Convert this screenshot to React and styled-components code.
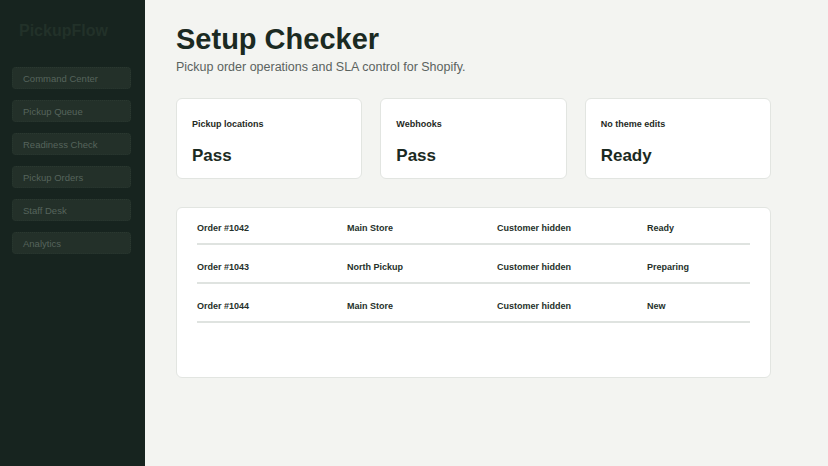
import React from "react";
import styled, { createGlobalStyle } from "styled-components";

const GlobalStyle = createGlobalStyle`
    html, body {
        margin: 0;
        padding: 0;
        background: #f3f4f1;
        font-family: "Liberation Sans", Arial, sans-serif;
    }
`;

const Layout = styled.div`
    display: flex;
    min-height: 466px;
`;

const Sidebar = styled.nav`
    width: 145px;
    flex-shrink: 0;
    background: #17241f;
    padding: 22px 14px 0 12px;
    box-sizing: border-box;
`;

const Brand = styled.div`
    color: #223129;
    font-size: 16px;
    font-weight: bold;
    padding-left: 7px;
    margin-bottom: 27px;
`;

const NavList = styled.div`
    display: flex;
    flex-direction: column;
    gap: 11px;
`;

const NavItem = styled.div`
    height: 22px;
    display: flex;
    align-items: center;
    padding-left: 10px;
    border-radius: 4px;
    background: #233029;
    border: 1px dotted #2a3830;
    box-sizing: border-box;
    color: #56645c;
    font-size: 9.5px;
`;

const Main = styled.main`
    flex: 1;
    padding: 22px 57px 0 31px;
`;

const Title = styled.h1`
    margin: 0;
    font-size: 29px;
    font-weight: bold;
    color: #1b2a22;
    line-height: 35px;
`;

const Subtitle = styled.p`
    margin: 3px 0 0;
    font-size: 12.5px;
    color: #5b635f;
`;

const Cards = styled.div`
    display: grid;
    grid-template-columns: repeat(3, 1fr);
    gap: 18px;
    margin-top: 24px;
`;

const Panel = styled.div`
    background: #fff;
    border: 1px solid #e2e5e1;
    border-radius: 6px;
    box-sizing: border-box;
`;

const Card = styled(Panel)`
    height: 81px;
    padding: 20px 15px 0;
`;

const CardLabel = styled.div`
    font-size: 9px;
    font-weight: bold;
    color: #1f2a24;
`;

const CardValue = styled.div`
    margin-top: 17px;
    font-size: 17px;
    font-weight: bold;
    color: #1b2a22;
`;

const TablePanel = styled(Panel)`
    margin-top: 28px;
    height: 171px;
    padding: 0 20px;
`;

const Row = styled.div`
    display: grid;
    grid-template-columns: 150px 150px 150px 1fr;
    padding: 17px 0 9px;
    border-bottom: 2px solid #dfe3e0;
    font-size: 9px;
    font-weight: bold;
    color: #25302a;
    line-height: 11px;

    &:first-child {
        padding-top: 15px;
    }
`;

const navItems = ["Command Center", "Pickup Queue", "Readiness Check", "Pickup Orders", "Staff Desk", "Analytics"];

const checks = [
    { label: "Pickup locations", value: "Pass" },
    { label: "Webhooks", value: "Pass" },
    { label: "No theme edits", value: "Ready" },
];

const orders = [
    ["Order #1042", "Main Store", "Customer hidden", "Ready"],
    ["Order #1043", "North Pickup", "Customer hidden", "Preparing"],
    ["Order #1044", "Main Store", "Customer hidden", "New"],
];

export default function App() {
    return (
        <>
            <GlobalStyle />
            <Layout>
                <Sidebar>
                    <Brand>PickupFlow</Brand>
                    <NavList>
                        {navItems.map((item) => (
                            <NavItem key={item}>{item}</NavItem>
                        ))}
                    </NavList>
                </Sidebar>
                <Main>
                    <Title>Setup Checker</Title>
                    <Subtitle>Pickup order operations and SLA control for Shopify.</Subtitle>
                    <Cards>
                        {checks.map((c) => (
                            <Card key={c.label}>
                                <CardLabel>{c.label}</CardLabel>
                                <CardValue>{c.value}</CardValue>
                            </Card>
                        ))}
                    </Cards>
                    <TablePanel>
                        {orders.map((o) => (
                            <Row key={o[0]}>
                                {o.map((cell) => (
                                    <span key={cell}>{cell}</span>
                                ))}
                            </Row>
                        ))}
                    </TablePanel>
                </Main>
            </Layout>
        </>
    );
}
